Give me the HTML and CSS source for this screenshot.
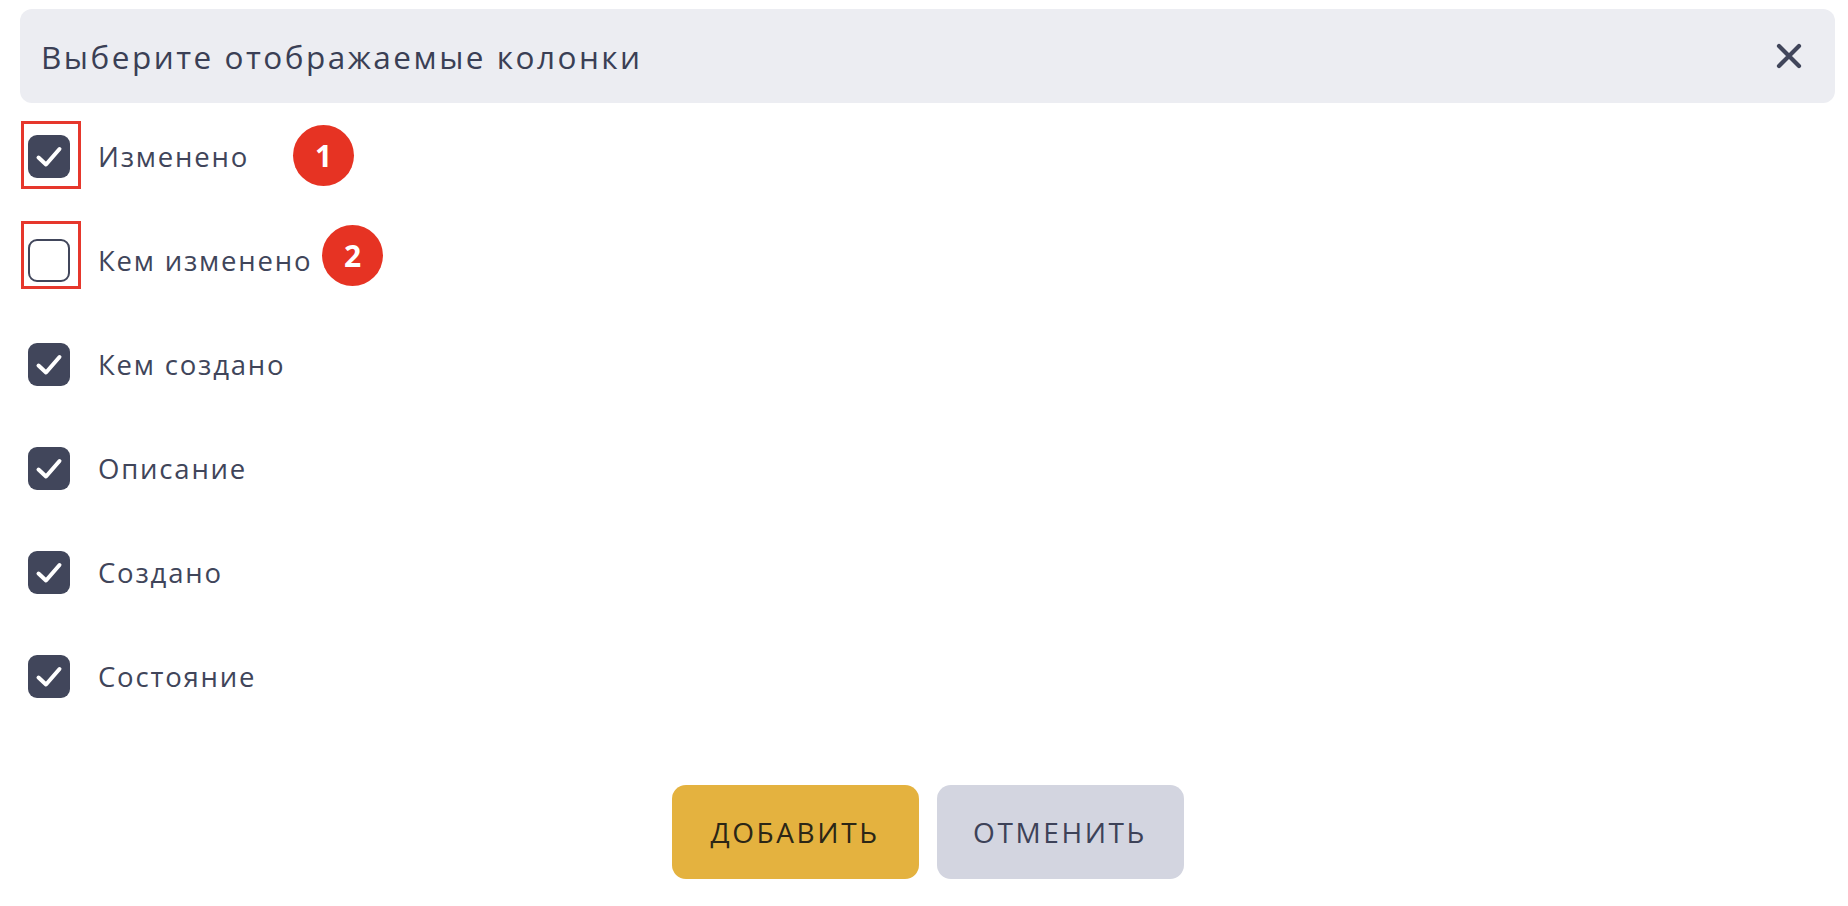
FILE: index.html
```html
<!DOCTYPE html>
<html lang="ru">
<head>
<meta charset="utf-8">
<title>Выберите отображаемые колонки</title>
<link rel="stylesheet" href="styles.css">
</head>
<body>
<div class="dialog">
  <div class="header">
    <div class="title">Выберите отображаемые колонки</div>
    <button class="close" aria-label="Закрыть">
      <svg viewBox="0 0 26 26" width="26" height="26"><path d="M3 3 L23 23 M23 3 L3 23" stroke="#41465b" stroke-width="4.2" stroke-linecap="round" fill="none"/></svg>
    </button>
  </div>
  <div class="list">
    <label class="row">
      <span class="box checked"><svg viewBox="0 0 42 42"><path d="M10.5 22.5 L18 29.5 L31.5 14" stroke="#fff" stroke-width="4" stroke-linecap="round" stroke-linejoin="round" fill="none"/></svg></span>
      <span class="text">Изменено</span>
    </label>
    <label class="row">
      <span class="box"></span>
      <span class="text">Кем изменено</span>
    </label>
    <label class="row">
      <span class="box checked"><svg viewBox="0 0 42 42"><path d="M10.5 22.5 L18 29.5 L31.5 14" stroke="#fff" stroke-width="4" stroke-linecap="round" stroke-linejoin="round" fill="none"/></svg></span>
      <span class="text">Кем создано</span>
    </label>
    <label class="row">
      <span class="box checked"><svg viewBox="0 0 42 42"><path d="M10.5 22.5 L18 29.5 L31.5 14" stroke="#fff" stroke-width="4" stroke-linecap="round" stroke-linejoin="round" fill="none"/></svg></span>
      <span class="text">Описание</span>
    </label>
    <label class="row">
      <span class="box checked"><svg viewBox="0 0 42 42"><path d="M10.5 22.5 L18 29.5 L31.5 14" stroke="#fff" stroke-width="4" stroke-linecap="round" stroke-linejoin="round" fill="none"/></svg></span>
      <span class="text">Создано</span>
    </label>
    <label class="row">
      <span class="box checked"><svg viewBox="0 0 42 42"><path d="M10.5 22.5 L18 29.5 L31.5 14" stroke="#fff" stroke-width="4" stroke-linecap="round" stroke-linejoin="round" fill="none"/></svg></span>
      <span class="text">Состояние</span>
    </label>
  </div>
  <div class="actions">
    <button class="btn btn-primary">ДОБАВИТЬ</button>
    <button class="btn btn-secondary">ОТМЕНИТЬ</button>
  </div>

  <div class="mark mark-1"></div>
  <div class="mark mark-2"></div>
  <div class="badge badge-1">1</div>
  <div class="badge badge-2">2</div>
</div>
</body>
</html>
```

FILE: styles.css
```css
* { box-sizing: border-box; }
html, body {
  margin: 0;
  padding: 0;
  background: #ffffff;
}
body {
  font-family: "Open Sans", "Noto Sans", sans-serif;
  color: #3d4258;
}
.dialog {
  position: relative;
  padding: 9px 13px 0 20px;
  width: 1848px;
  height: 906px;
}
.header {
  height: 94px;
  background: #ecedf2;
  border-radius: 12px;
  display: flex;
  align-items: center;
  justify-content: space-between;
  padding: 0 33px 0 21px;
}
.title {
  font-size: 31.5px;
  font-weight: 500;
  color: #3a3f55;
  letter-spacing: 2.5px;
}
.close {
  border: 0;
  background: transparent;
  padding: 0;
  width: 26px;
  height: 26px;
  display: flex;
}
.close svg { display: block; }
.list {
  display: flex;
  flex-direction: column;
  padding-left: 8px;
}
.row {
  height: 104px;
  display: flex;
  align-items: center;
  gap: 28px;
}
.row:first-child { margin-top: 1px; }
.box {
  width: 42px;
  height: 43px;
  border-radius: 9px;
  border: 2.5px solid #41465b;
  background: #ffffff;
  display: flex;
  align-items: center;
  justify-content: center;
  flex: none;
}
.box.checked {
  background: #41465b;
  border: 0;
}
.box svg { width: 42px; height: 42px; display: block; }
.text {
  font-size: 27.5px;
  font-weight: 500;
  color: #40455a;
  letter-spacing: 1.8px;
}
.actions {
  display: flex;
  justify-content: center;
  gap: 18px;
  margin-top: 57px;
}
.btn {
  width: 247px;
  height: 94px;
  border: 0;
  border-radius: 14px;
  font-family: "Open Sans", "Noto Sans", sans-serif;
  font-size: 28px;
  font-weight: 500;
  letter-spacing: 2.6px;
  padding: 0;
}
.btn-primary { background: #e4b23f; color: #2b2616; }
.btn-secondary { background: #d3d5e0; color: #3d4258; }

.mark {
  position: absolute;
  left: 21px;
  width: 60px;
  height: 68px;
  border: 3px solid #e6372c;
}
.mark-1 { top: 121px; }
.mark-2 { top: 221px; }
.badge {
  position: absolute;
  width: 61px;
  height: 61px;
  border-radius: 50%;
  background: #e63323;
  color: #ffffff;
  font-family: "Open Sans", sans-serif;
  font-weight: 700;
  font-size: 30px;
  display: flex;
  align-items: center;
  justify-content: center;
}
.badge-1 { left: 293px; top: 125px; }
.badge-2 { left: 322px; top: 225px; }
```
